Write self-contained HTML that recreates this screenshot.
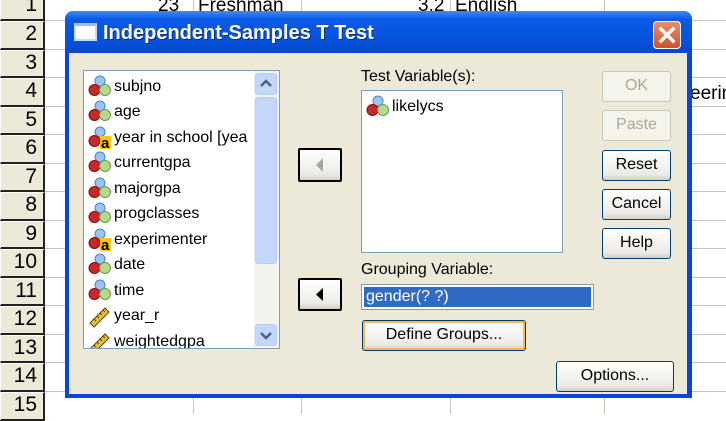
<!DOCTYPE html>
<html><head><meta charset="utf-8"><style>
*{margin:0;padding:0;box-sizing:border-box}
body{width:726px;height:414px;overflow:hidden;background:#fff;font-family:"Liberation Sans",sans-serif;position:relative}
.rh{position:absolute;left:0;width:45px;background:#ece9d8;border-right:2px solid #222;border-bottom:2px solid #222;font-size:21px;text-align:right;padding-right:6px;color:#000;border-left:1px solid #fff;border-top:1px solid #fff}
.hl{position:absolute;left:45px;right:0;height:1px;background:#c8c4b8}
.vl{position:absolute;top:0;bottom:0;width:1px;background:#c8c4b8}
.cell{position:absolute;font-size:19px}
#dlg{position:absolute;left:65px;top:11px;width:627px;height:387px;background:#0a47d6;border-radius:8px 8px 0 0}
#title{position:absolute;left:0;top:0;right:0;height:42px;border-radius:8px 8px 0 0;background:linear-gradient(#3b8cf6,#0a5ae6 20%,#0652dd 70%,#0a47c8)}
#title span{position:absolute;left:38px;top:11px;color:#fff;font-weight:bold;font-size:20px;text-shadow:1px 1px #0a2a80}
#ti{position:absolute;left:9px;top:12px;width:23px;height:18px;background:#fff;border:2px solid #c8d8f8;border-top:3px solid #9cbcf0}
#cls{position:absolute;left:588px;top:10px;width:28px;height:28px;background:linear-gradient(#e8906c,#d2502a);border:1px solid #fff;border-radius:4px}
#body{position:absolute;left:4px;top:42px;width:618px;height:341px;background:#ece9d8}
.box{position:absolute;background:#fff;border:1px solid #7f9db9}
.it{position:absolute;left:4px;height:25px;font-size:16px;display:flex;align-items:center;white-space:nowrap}
.it svg{margin-right:2px}
.btn{position:absolute;border:1px solid #003c74;border-radius:3px;background:linear-gradient(#fff,#ecebe6 80%,#d6d0c5);font-size:16px;text-align:center;color:#000}
.dis{border-color:#c9c7ba;color:#aca899;background:#f5f4ea}
.lbl{position:absolute;font-size:16px}
</style></head><body>
<div class="rh" style="top:-8px;height:29px;">1</div>
<div class="rh" style="top:21px;height:29px;">2</div>
<div class="rh" style="top:50px;height:28px;">3</div>
<div class="rh" style="top:78px;height:29px;">4</div>
<div class="rh" style="top:107px;height:28px;">5</div>
<div class="rh" style="top:135px;height:29px;">6</div>
<div class="rh" style="top:164px;height:28px;">7</div>
<div class="rh" style="top:192px;height:29px;">8</div>
<div class="rh" style="top:221px;height:28px;">9</div>
<div class="rh" style="top:249px;height:29px;">10</div>
<div class="rh" style="top:278px;height:28px;">11</div>
<div class="rh" style="top:306px;height:29px;">12</div>
<div class="rh" style="top:335px;height:28px;">13</div>
<div class="rh" style="top:363px;height:29px;">14</div>
<div class="rh" style="top:392px;height:29px;">15</div>
<div class="hl" style="top:20px"></div><div class="hl" style="top:49px"></div><div class="hl" style="top:77px"></div><div class="hl" style="top:106px"></div><div class="hl" style="top:134px"></div><div class="hl" style="top:163px"></div><div class="hl" style="top:191px"></div><div class="hl" style="top:220px"></div><div class="hl" style="top:248px"></div><div class="hl" style="top:277px"></div><div class="hl" style="top:305px"></div><div class="hl" style="top:334px"></div><div class="hl" style="top:362px"></div><div class="hl" style="top:391px"></div>
<div class="vl" style="left:193px"></div><div class="vl" style="left:301px"></div><div class="vl" style="left:450px"></div><div class="vl" style="left:604px"></div>
<div class="cell" style="left:158px;top:-5px">23</div>
<div class="cell" style="left:198px;top:-5px">Freshman</div>
<div class="cell" style="left:418px;top:-5px">3.2</div>
<div class="cell" style="left:455px;top:-5px">English</div>
<div class="cell" style="left:690px;top:83px">eerin</div>
<div id="dlg">
<div id="title"><div id="ti"></div><span>Independent-Samples T Test</span>
<div id="cls"><svg width="26" height="26" viewBox="0 0 26 26"><path d="M7 7L19 19M19 7L7 19" stroke="#fff" stroke-width="3.5" stroke-linecap="square"/></svg></div></div>
<div id="body">
<svg width="0" height="0" style="position:absolute"><defs>
<g id="b"><circle cx="12" cy="6" r="5" fill="#9cc4f0" stroke="#4a80d0"/><circle cx="6.5" cy="15" r="5.5" fill="#c82828" stroke="#801010"/><circle cx="17" cy="15" r="5.5" fill="#b8d890" stroke="#60a040"/></g>
<g id="a"><circle cx="12" cy="6" r="5" fill="#9cc4f0" stroke="#4a80d0"/><circle cx="6.5" cy="15" r="5.5" fill="#c82828" stroke="#801010"/><rect x="12" y="10" width="11" height="13" fill="#f8c800"/><text x="13" y="22" font-size="15" font-weight="bold" font-family="Liberation Sans">a</text></g>
<g id="r"><path d="M2 19L17 4L21 8L6 23Z" fill="#e8c040" stroke="#604000"/><path d="M6 15l2 2M9 12l2 2M12 9l2 2M15 6l2 2" stroke="#604000"/></g>
</defs></svg>
<div class="box" style="left:14px;top:17px;width:197px;height:279px;overflow:hidden">
<div class="it" style="top:3px"><svg width="24" height="24"><use href="#b"/></svg>subjno</div>
<div class="it" style="top:28px"><svg width="24" height="24"><use href="#b"/></svg>age</div>
<div class="it" style="top:54px"><svg width="24" height="24"><use href="#a"/></svg>year in school [yea</div>
<div class="it" style="top:79px"><svg width="24" height="24"><use href="#b"/></svg>currentgpa</div>
<div class="it" style="top:105px"><svg width="24" height="24"><use href="#b"/></svg>majorgpa</div>
<div class="it" style="top:130px"><svg width="24" height="24"><use href="#b"/></svg>progclasses</div>
<div class="it" style="top:156px"><svg width="24" height="24"><use href="#a"/></svg>experimenter</div>
<div class="it" style="top:181px"><svg width="24" height="24"><use href="#b"/></svg>date</div>
<div class="it" style="top:207px"><svg width="24" height="24"><use href="#b"/></svg>time</div>
<div class="it" style="top:232px"><svg width="24" height="24"><use href="#r"/></svg>year_r</div>
<div class="it" style="top:258px"><svg width="24" height="24"><use href="#r"/></svg>weightedgpa</div>
<div style="position:absolute;left:170px;top:0;width:25px;height:277px;background:#f3f2ec">
<div style="position:absolute;left:1px;top:2px;width:22px;height:22px;border:1px solid #b8cdf8;border-radius:3px;background:#c4d6fa"><svg width="20" height="20"><path d="M5 12L10 7L15 12" stroke="#4d6185" stroke-width="2.5" fill="none"/></svg></div>
<div style="position:absolute;left:1px;top:26px;width:22px;height:167px;border:1px solid #b8cdf8;border-radius:3px;background:#c4d6fa"></div>
<div style="position:absolute;left:1px;top:253px;width:22px;height:22px;border:1px solid #b8cdf8;border-radius:3px;background:#c4d6fa"><svg width="20" height="20"><path d="M5 8L10 13L15 8" stroke="#4d6185" stroke-width="2.5" fill="none"/></svg></div>
</div></div>
<div class="btn" style="left:229px;top:95px;width:44px;height:34px;border:2px solid #000;border-radius:2px"><svg width="40" height="30"><path d="M23 8L16 15L23 22Z" fill="#aca899"/></svg></div>
<div class="btn" style="left:229px;top:225px;width:44px;height:33px;border:2px solid #000;border-radius:2px"><svg width="40" height="29"><path d="M23 8L16 14.5L23 21Z" fill="#000"/></svg></div>
<div class="lbl" style="left:292px;top:15px">Test Variable(s):</div>
<div class="box" style="left:292px;top:37px;width:202px;height:163px">
<div class="it" style="top:3px"><svg width="24" height="24"><use href="#b"/></svg>likelycs</div></div>
<div class="lbl" style="left:292px;top:208px">Grouping Variable:</div>
<div class="box" style="left:292px;top:231px;width:233px;height:26px;padding:2px"><div style="background:#316ac5;color:#fff;font-size:16px;height:20px;line-height:20px;padding-left:2px;outline:1px dotted #fff">gender(? ?)</div></div>
<div class="btn" style="left:293px;top:267px;width:164px;height:31px;line-height:28px;box-shadow:inset 0 0 0 2px #f8b858">Define Groups...</div>
<div class="btn" style="left:487px;top:308px;width:118px;height:31px;line-height:28px">Options...</div>
<div class="btn dis" style="left:533px;top:18px;width:69px;height:31px;line-height:28px">OK</div>
<div class="btn dis" style="left:533px;top:57px;width:69px;height:31px;line-height:28px">Paste</div>
<div class="btn" style="left:533px;top:97px;width:69px;height:31px;line-height:28px">Reset</div>
<div class="btn" style="left:533px;top:136px;width:69px;height:31px;line-height:28px">Cancel</div>
<div class="btn" style="left:533px;top:175px;width:69px;height:31px;line-height:28px">Help</div>
</div></div>
</body></html>
